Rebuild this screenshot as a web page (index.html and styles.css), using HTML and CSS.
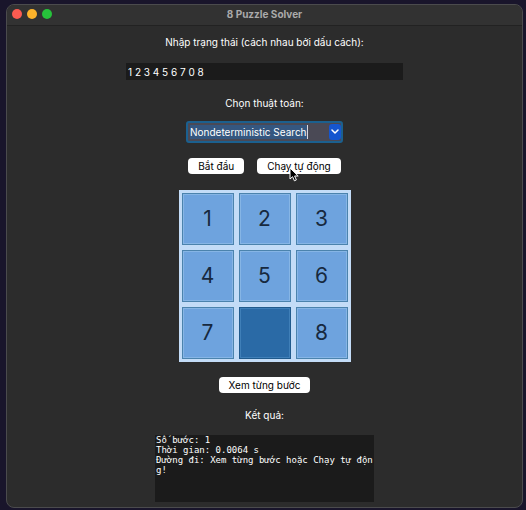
FILE: index.html
```html
<!DOCTYPE html>
<html lang="vi">
<head>
<meta charset="utf-8">
<title>8 Puzzle Solver</title>
<link rel="stylesheet" href="styles.css">
</head>
<body>
<div class="window">
  <header class="titlebar">
    <div class="lights">
      <span class="light close"></span>
      <span class="light minimize"></span>
      <span class="light zoom"></span>
    </div>
    <h1 class="title">8 Puzzle Solver</h1>
  </header>
  <main class="content">
    <label class="label" for="state">Nhập trạng thái (cách nhau bởi dấu cách):</label>
    <input class="state" id="state" type="text" value="1 2 3 4 5 6 7 0 8">
    <label class="label" for="algorithm">Chọn thuật toán:</label>
    <div class="combo">
      <select class="combo-select" id="algorithm">
        <option>Nondeterministic Search</option>
      </select>
      <span class="combo-arrow">
        <svg width="8" height="6" viewBox="0 0 8 6"><path d="M1 1l3 3 3-3" fill="none" stroke="#fff" stroke-width="1.5" stroke-linecap="round" stroke-linejoin="round"/></svg>
      </span>
    </div>
    <div class="actions">
      <button class="button" type="button">Bắt đầu</button>
      <button class="button button-auto" type="button">Chạy tự động
        <svg class="cursor" width="11" height="15" viewBox="0 0 11 15"><path d="M1 1v11l2.600-2.300 1.800 4.100 2-.9-1.800-3.900h3.600z" fill="#000" stroke="#fff" stroke-width="1"/></svg>
      </button>
    </div>
    <div class="board">
      <div class="tile">1</div>
      <div class="tile">2</div>
      <div class="tile">3</div>
      <div class="tile">4</div>
      <div class="tile">5</div>
      <div class="tile">6</div>
      <div class="tile">7</div>
      <div class="tile tile-empty"></div>
      <div class="tile">8</div>
    </div>
    <button class="button button-steps" type="button">Xem từng bước</button>
    <label class="label" for="result">Kết quả:</label>
    <textarea class="result" id="result" spellcheck="false">Số bước: 1
Thời gian: 0.0064 s
Đường đi: Xem từng bước hoặc Chạy tự động!</textarea>
  </main>
</div>
</body>
</html>
```
FILE: styles.css
```css
* {
  box-sizing: border-box;
}

body {
  margin: 0;
  min-height: 100vh;
  display: flex;
  padding: 4px 3px 2px 6px;
  background: #19152b;
  font: 10px/14px Inter, "Liberation Sans", sans-serif;
  color: #fff;
}

.window {
  flex: 1;
  display: flex;
  flex-direction: column;
  border: 1px solid #4b4b4d;
  border-radius: 8px;
  background: #2c2c2c;
  overflow: hidden;
}

.titlebar {
  display: grid;
  grid-template-columns: 1fr auto 1fr;
  align-items: center;
  height: 21px;
  padding: 0 5px 2px;
  background: #323232;
  border-bottom: 1px solid #222;
}

.lights {
  display: flex;
  gap: 5px;
}

.light {
  width: 10px;
  height: 10px;
  border-radius: 50%;
}

.close {
  background: #fc5b51;
}

.minimize {
  background: #fdb32b;
}

.zoom {
  background: #26c33b;
}

.title {
  margin: 0;
  font-size: 10px;
  font-weight: 700;
  color: #aaa;
}

.content {
  display: flex;
  flex-direction: column;
  align-items: center;
  padding: 9px 16px 5px;
}

.label {
  display: block;
}

.state {
  width: 277px;
  max-width: 100%;
  height: 17px;
  margin: 14px 0 16px;
  padding: 0 2px;
  border: 0;
  border-radius: 0;
  background: #1b1b1b;
  color: inherit;
  font: inherit;
}

.combo {
  position: relative;
  margin: 11px 0 15px;
}

.combo-select {
  appearance: none;
  display: block;
  width: 157px;
  height: 22px;
  padding: 0 16px 0 2px;
  border: 2px solid #1b608f;
  border-radius: 3px;
  background: linear-gradient(90deg, #355780 117px, #d8d8e0 117px, #d8d8e0 118px, #4a4955 118px) 2px 2px / 100% 14px no-repeat #4a4955;
  color: #fff;
  font: inherit;
}

.combo-arrow {
  position: absolute;
  top: 3px;
  right: 2px;
  bottom: 3px;
  width: 12px;
  display: flex;
  align-items: center;
  justify-content: center;
  border-radius: 3px;
  background: #1556cf;
  pointer-events: none;
}

.actions {
  display: flex;
  gap: 13px;
}

.button {
  height: 16px;
  padding: 0 10px;
  border: 0;
  border-radius: 4px;
  background: #fff;
  color: #000;
  font: inherit;
}

.button-auto {
  position: relative;
}

.cursor {
  position: absolute;
  top: 9px;
  left: 32px;
}

.board {
  display: grid;
  grid-template-columns: repeat(3, 52px);
  grid-auto-rows: 52px;
  gap: 5px;
  margin: 16px 0 15px;
  padding: 3px;
  background: #c3dcf7;
}

.tile {
  display: flex;
  align-items: center;
  justify-content: center;
  border: 1px solid #4b83ad;
  outline: 1px solid #86b5e5;
  outline-offset: -2px;
  background: #6ea3de;
  color: #17293e;
  font: 21px/24px Inter, sans-serif;
}

.tile-empty {
  background: #2a6aa6;
  border-color: #205a8c;
  outline-color: #3f7fb8;
}

.button-steps {
  margin-bottom: 15px;
}

.result {
  width: 219px;
  height: 67px;
  margin: 13px 0 0;
  padding: 0 1px;
  border: 0;
  background: #1b1b1b;
  color: #fff;
  font: 9px/10px "DejaVu Sans Mono", "Liberation Mono", monospace;
  word-break: break-all;
  resize: none;
  overflow: hidden;
}
```
